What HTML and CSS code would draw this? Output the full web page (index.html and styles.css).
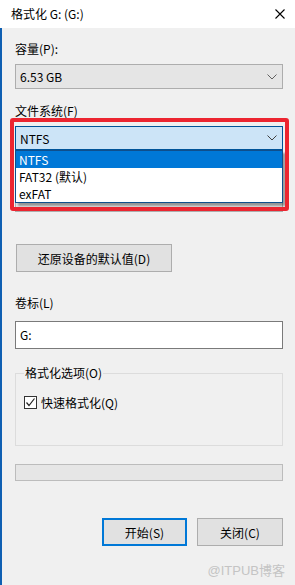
FILE: index.html
```html
<!DOCTYPE html>
<html lang="zh-CN">
<head>
  <meta charset="UTF-8" />
  <meta name="viewport" content="width=device-width, initial-scale=1.0"/>
  <title>格式化 G: (G:)</title>
  <link rel="stylesheet" href="styles.css">
</head>
<body>
  <div class="window">
    <div class="titlebar">
      <span class="title">格式化 G: (G:)</span>
      <svg class="close" width="10" height="10" viewBox="0 0 10 10">
        <path d="M0.5 0.5 L9.5 9.5 M9.5 0.5 L0.5 9.5" stroke="#000" stroke-width="1.1" fill="none"/>
      </svg>
    </div>

    <div class="content">
      <div class="label">容量(P):</div>
      <div class="combo">
        <span>6.53 GB</span>
        <svg class="chev" width="10" height="6" viewBox="0 0 10 6"><polyline points="0.5,0.5 5,5 9.5,0.5" fill="none" stroke="#606060" stroke-width="1"/></svg>
      </div>

      <div class="label gap-label">文件系统(F)</div>
      <div class="combo-wrap">
        <div class="combo focused">
          <span>NTFS</span>
          <svg class="chev" width="10" height="6" viewBox="0 0 10 6"><polyline points="0.5,0.5 5,5 9.5,0.5" fill="none" stroke="#404040" stroke-width="1"/></svg>
        </div>
        <ul class="dropdown">
          <li class="selected">NTFS</li>
          <li>FAT32 (默认)</li>
          <li>exFAT</li>
        </ul>
        <div class="mark"></div>
      </div>

      <!-- allocation size row, covered by the open list -->
      <div class="label gap-label"></div>
      <div class="combo"></div>

      <button class="btn restore">还原设备的默认值(D)</button>

      <div class="label vol-label">卷标(L)</div>
      <div class="textbox">G:</div>

      <fieldset class="group">
        <legend>格式化选项(O)</legend>
        <label class="check">
          <span class="box">
            <svg width="11" height="11" viewBox="0 0 11 11"><polyline points="1.5,5.5 4,8.5 9.5,1.5" fill="none" stroke="#222" stroke-width="1.2"/></svg>
          </span>
          快速格式化(Q)
        </label>
      </fieldset>

      <div class="progress"></div>

      <div class="actions">
        <button class="btn primary">开始(S)</button>
        <button class="btn">关闭(C)</button>
      </div>

      <div class="watermark">@ITPUB博客</div>
    </div>
  </div>
</body>
</html>
```

FILE: styles.css
```css
* {
  box-sizing: border-box;
}

body {
  margin: 0;
  width: 295px;
  height: 585px;
  overflow: hidden;
  font-family: "Noto Sans CJK SC", "Noto Sans", sans-serif;
  font-size: 12px;
  color: #000;
  background: #f0f0f0;
}

.window {
  display: flex;
  flex-direction: column;
  height: 585px;
}

.titlebar {
  height: 28px;
  background: #fff;
  display: flex;
  align-items: center;
  justify-content: space-between;
  padding: 0 10px 0 11px;
  flex-shrink: 0;
}

.title {
  font-size: 12px;
  line-height: 16px;
}

.close {
  display: block;
}

.content {
  position: relative;
  flex: 1;
  display: flex;
  flex-direction: column;
  padding: 13px 12px 0 13px;
  border-left: 2px solid #0f5fb2;
}

.label {
  height: 16px;
  line-height: 16px;
  margin-bottom: 7px;
}

.gap-label {
  margin-top: 14px;
}

.combo {
  height: 25px;
  display: flex;
  align-items: center;
  justify-content: space-between;
  padding: 0 5px 0 4px;
  background: #e5e5e5;
  border: 1px solid #adadad;
}

.combo.focused {
  height: 24px;
  background: #cce4f7;
  border-color: #005499;
}

.chev {
  display: block;
}

.combo-wrap {
  position: relative;
  z-index: 2;
}

.dropdown {
  position: absolute;
  top: 100%;
  left: 0;
  right: 0;
  margin: 0;
  padding: 0;
  list-style: none;
  background: #fff;
  border: 1px solid #0f4f8c;
  box-shadow: 3px 3px 2px rgba(0, 0, 0, 0.35);
}

.dropdown li {
  height: 17px;
  line-height: 17px;
  padding-left: 3px;
}

.dropdown li.selected {
  background: #0078d7;
  color: #fff;
}

.mark {
  position: absolute;
  top: -8px;
  left: -5px;
  width: 279px;
  height: 93px;
  border: 4px solid #ec2530;
  border-radius: 3px;
}

.btn {
  font-family: inherit;
  font-size: 12px;
  color: #000;
  background: #e1e1e1;
  border: 1px solid #adadad;
  height: 28px;
  padding: 0;
}

.restore {
  width: 156px;
  margin-top: 32px;
  margin-left: 1px;
  align-self: flex-start;
}

.vol-label {
  margin-top: 23px;
  margin-bottom: 10px;
}

.textbox {
  height: 28px;
  line-height: 26px;
  padding-left: 4px;
  background: #fff;
  border: 1px solid #7a7a7a;
}

.group {
  margin: 16px 0 0;
  height: 81px;
  padding: 13px 8px 0 8px;
  border: 1px solid #dcdcdc;
}

.group legend {
  padding: 0 1px;
  line-height: 16px;
}

.check {
  display: flex;
  align-items: center;
  gap: 4px;
}

.box {
  width: 13px;
  height: 13px;
  border: 1px solid #333;
  background: #fff;
  display: flex;
  align-items: center;
  justify-content: center;
}

.box svg {
  display: block;
}

.progress {
  height: 17px;
  margin-top: 18px;
  background: #e6e6e6;
  border: 1px solid #bcbcbc;
}

.actions {
  display: flex;
  justify-content: flex-end;
  gap: 10px;
  margin-top: 37px;
}

.actions .btn {
  width: 86px;
}

.btn.primary {
  width: 85px;
  border: 2px solid #0078d7;
}

.watermark {
  position: absolute;
  right: 10px;
  bottom: 6px;
  font-family: "Liberation Sans", "Noto Sans CJK SC", sans-serif;
  font-size: 13px;
  color: #c4c4c4;
}
```
